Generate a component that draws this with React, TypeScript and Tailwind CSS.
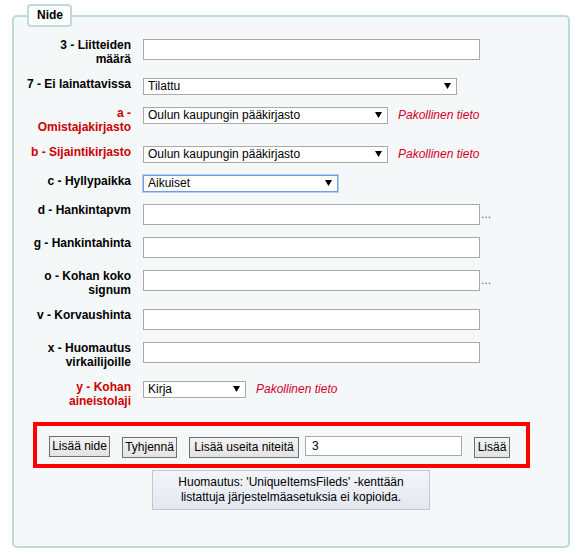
import { ReactNode } from 'react'

type Row = {
  label: ReactNode
  required?: boolean
  kind: 'text' | 'select'
  value?: string
  width?: string
  dots?: boolean
  focused?: boolean
}

const rows: Row[] = [
  { label: '3 - Liitteiden määrä', kind: 'text' },
  { label: '7 - Ei lainattavissa', kind: 'select', value: 'Tilattu', width: 'w-[314px]' },
  { label: 'a - Omistajakirjasto', required: true, kind: 'select', value: 'Oulun kaupungin pääkirjasto', width: 'w-[245px]' },
  { label: 'b - Sijaintikirjasto', required: true, kind: 'select', value: 'Oulun kaupungin pääkirjasto', width: 'w-[245px]' },
  { label: 'c - Hyllypaikka', kind: 'select', value: 'Aikuiset', width: 'w-[195px]', focused: true },
  { label: 'd - Hankintapvm', kind: 'text', dots: true },
  { label: 'g - Hankintahinta', kind: 'text' },
  { label: 'o - Kohan koko signum', kind: 'text', dots: true },
  { label: 'v - Korvaushinta', kind: 'text' },
  { label: 'x - Huomautus virkailijoille', kind: 'text' },
  { label: 'y - Kohan aineistolaji', required: true, kind: 'select', value: 'Kirja', width: 'w-[103px]' },
]

function Arrow() {
  return (
    <svg
      width="7"
      height="6"
      viewBox="0 0 7 6"
      className="pointer-events-none absolute right-[6px] top-[5px]"
    >
      <polygon points="0,0 7,0 3.5,6" fill="#000" />
    </svg>
  )
}

function SelectBox({ value, width, focused }: { value: string; width: string; focused?: boolean }) {
  const borderCls = focused
    ? 'border-[#6e9de0] shadow-[0_0_0_1px_#b7cff2]'
    : 'border-[#a9a9a9]'
  return (
    <div className={`relative ${width}`}>
      <select
        defaultValue={value}
        className={`block w-full h-[17px] appearance-none border ${borderCls} bg-white pl-[4px] text-[12px] leading-[15px] text-black outline-none`}
      >
        <option>{value}</option>
      </select>
      <Arrow />
    </div>
  )
}

function Button({ children, width }: { children: ReactNode; width: string }) {
  return (
    <button
      type="button"
      className={`${width} h-[21px] shrink-0 border border-[#707070] bg-gradient-to-b from-[#f3f3f3] to-[#e3e3e3] text-[12px] leading-[19px] text-black`}
    >
      {children}
    </button>
  )
}

export default function App() {
  const labelClassName =
    'w-[106px] shrink-0 text-right font-bold text-[12px] leading-[13.5px]'

  return (
    <div className="min-h-[554px] bg-white pt-[4px] pl-[12px] font-['Liberation_Sans',Arial,sans-serif] text-black">
      <fieldset className="w-[558px] rounded-[5px] border-2 border-[#bcdcdc] bg-[#f4f8f9] px-[11px] pt-[12px] pb-[36px]">
        <legend className="ml-[2px] rounded-[4px] border-2 border-[#bcdcdc] bg-white pl-[8px] pr-[7px] text-[12px] font-bold leading-[19px]">
          Nide
        </legend>

        {rows.map((row, i) => (
          <div key={i} className="mb-[12px] flex items-start">
            <div className={`${labelClassName} ${row.required ? 'text-[#cc0000]' : 'text-black'}`}>
              {row.label}
            </div>
            <div className="ml-[12px] flex items-center">
              {row.kind === 'text' ? (
                <input
                  type="text"
                  className="block h-[21px] w-[337px] border border-[#a9a9a9] bg-white px-[3px] text-[12px] outline-none"
                />
              ) : (
                <SelectBox value={row.value ?? ''} width={row.width ?? ''} focused={row.focused} />
              )}
              {row.dots && (
                <span className="ml-[1px] self-start pt-[4px] text-[12px] leading-[13.5px] text-[#3b6fc0]">
                  ...
                </span>
              )}
              {row.required && (
                <span className="ml-[10px] text-[12px] italic leading-[13.5px] text-[#d4002c]">
                  Pakollinen tieto
                </span>
              )}
            </div>
          </div>
        ))}

        <div className="ml-[8px] mt-[14px] flex w-[497px] items-center border-4 border-[#ff0000] pl-[12px] pt-[8px] pb-[6px]">
          <Button width="w-[61px]">Lisää nide</Button>
          <div className="ml-[12px]">
            <Button width="w-[55px]">Tyhjennä</Button>
          </div>
          <div className="ml-[12px]">
            <Button width="w-[110px]">Lisää useita niteitä</Button>
          </div>
          <input
            type="text"
            defaultValue="3"
            className="ml-[6px] block h-[20px] w-[157px] border border-[#a9a9a9] bg-white pl-[6px] text-[12px] outline-none"
          />
          <div className="ml-[12px]">
            <Button width="w-[36px]">Lisää</Button>
          </div>
        </div>

        <div className="mx-auto mt-[2px] flex h-[40px] w-[278px] flex-col items-center justify-center border border-[#c3c7cf] bg-gradient-to-b from-[#f3f5fa] to-[#e3e7f0] text-center text-[12px] leading-[15px]">
          <span>Huomautus: 'UniqueItemsFileds' -kenttään</span>
          <span>listattuja järjestelmäasetuksia ei kopioida.</span>
        </div>
      </fieldset>
    </div>
  )
}
